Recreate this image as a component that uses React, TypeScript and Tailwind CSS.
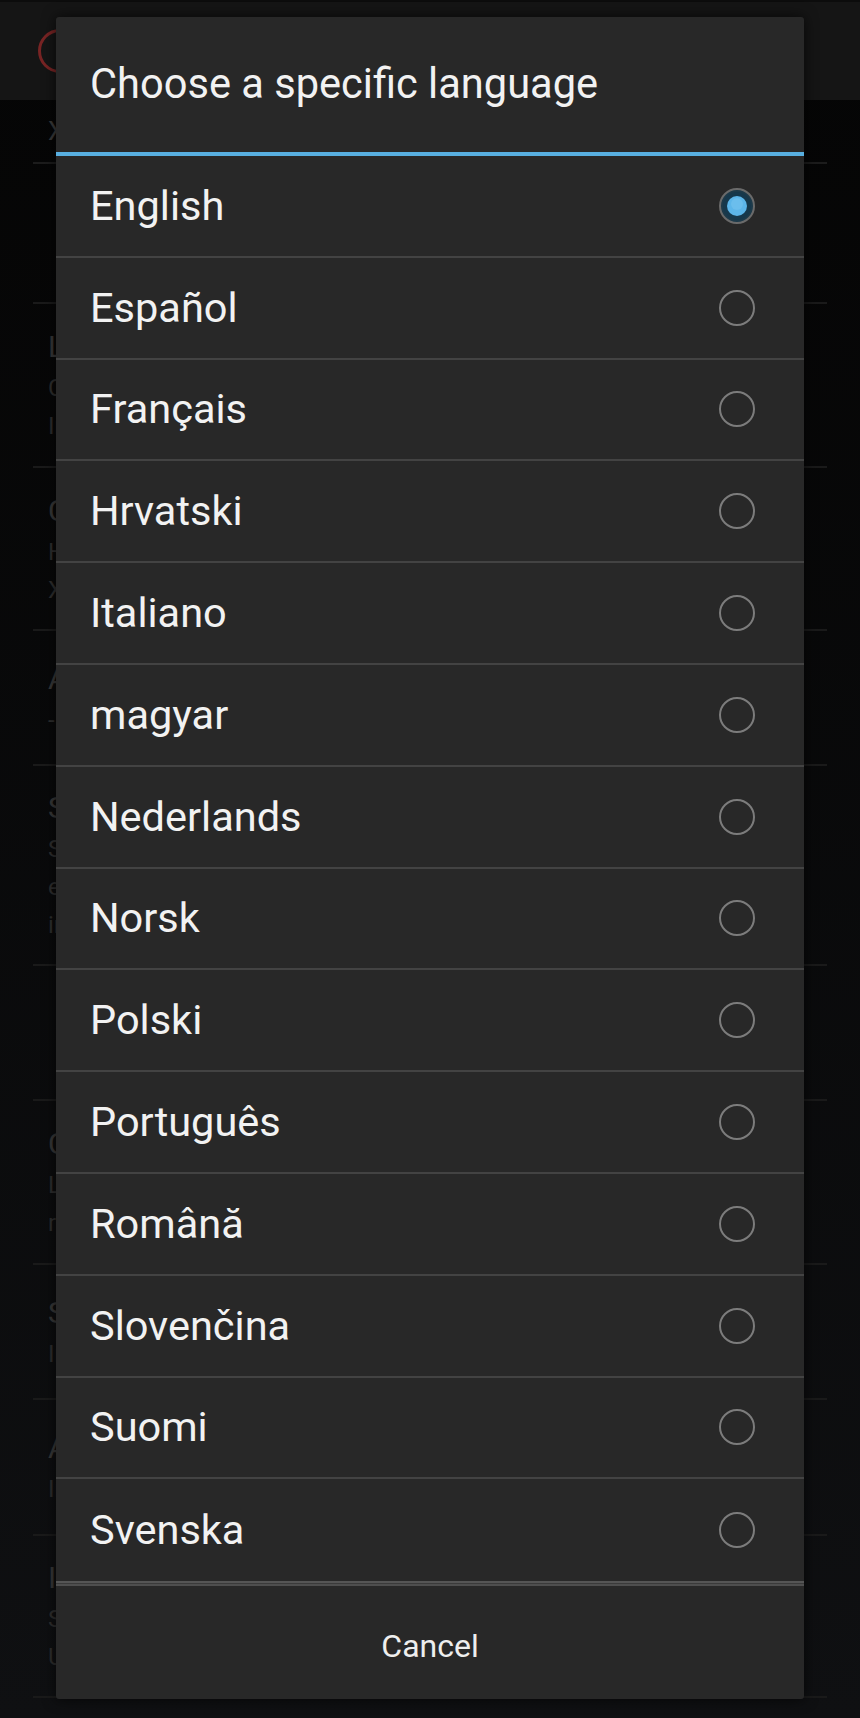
import { useState } from 'react';

const languages: string[] = [
  'English',
  'Español',
  'Français',
  'Hrvatski',
  'Italiano',
  'magyar',
  'Nederlands',
  'Norsk',
  'Polski',
  'Português',
  'Română',
  'Slovenčina',
  'Suomi',
  'Svenska'
];

// settings page behind the dialog, only its left edge peeks out
type BgSection = { height: number; lines: string[] };

const bgSections: BgSection[] = [
  { height: 140, lines: [] },
  { height: 164, lines: ['Language', 'Choose the display language', 'In English'] },
  { height: 163, lines: ['Currency', 'Home currency', 'XAF'] },
  { height: 135, lines: ['Amount', '-'] },
  { height: 200, lines: ['Show', 'Show all rates', 'every time', 'in list'] },
  { height: 135, lines: [] },
  { height: 164, lines: ['Colors', 'Light theme', 'rates'] },
  { height: 135, lines: ['Share', 'Include link'] },
  { height: 136, lines: ['About', 'Info'] },
  { height: 162, lines: ['Info', 'Share', 'Updates'] }
];

const RadioDot = ({ checked }: { checked: boolean }) => (
  <svg width="40" height="40" viewBox="0 0 40 40">
    {checked ? (
      <>
        <circle cx="20" cy="20" r="17" fill="#1d3a4a" stroke="#6a6a6a" strokeWidth="2" />
        <circle cx="20" cy="20" r="14" fill="#16384c" />
        <circle cx="20" cy="20" r="10" fill="#5cb6ea" />
        <circle cx="20" cy="18" r="6" fill="#7ac6f0" opacity="0.5" />
      </>
    ) : (
      <circle cx="20" cy="20" r="17" fill="none" stroke="#7c7c7c" strokeWidth="2" />
    )}
  </svg>
);

export default function App() {
  const [selected, setSelected] = useState<string>('English');

  return (
    <div
      className="relative w-[860px] h-[1718px] overflow-hidden bg-gradient-to-b from-[#050505] to-[#0f1012]"
      style={{ fontFamily: 'Roboto, "Noto Sans", sans-serif' }}
    >
      {/* app behind the dialog */}
      <header className="h-[100px] bg-[#151515] border-t-2 border-[#0c0c0c] flex items-center pl-[38px]">
        <div className="w-[44px] h-[44px] rounded-full border-[3px] border-[#782424]" />
      </header>
      <div className="h-[64px] flex items-center border-b-2 border-[#1c1c1c] mx-[33px] pl-[15px] text-[26px] text-[#3a3a3a]">
        X
      </div>
      <div className="mx-[33px]">
        {bgSections.map((section, i) => (
          <div
            key={i}
            className="flex flex-col justify-center gap-[10px] pl-[15px] border-b-2 border-[#1a1a1a]"
            style={{ height: section.height }}
          >
            {section.lines.map((line, j) => (
              <div
                key={j}
                className={
                  j === 0
                    ? 'text-[30px] leading-[34px] text-[#383838]'
                    : 'text-[24px] leading-[28px] text-[#2e2e2e]'
                }
              >
                {line}
              </div>
            ))}
          </div>
        ))}
      </div>

      {/* dialog */}
      <div className="absolute left-[56px] top-[17px] w-[748px] rounded-[3px] bg-[#282828] shadow-[0_0_14px_rgba(0,0,0,0.7)]">
        <div className="h-[135px] flex items-center pl-[34px] text-[41.6px] text-[#f2f2f2]">
          Choose a specific language
        </div>
        <div className="h-[4px] bg-[#58afe0]" />
        {languages.map((lang, i) => (
          <div
            key={lang}
            onClick={() => setSelected(lang)}
            className={`h-[101.8px] flex items-center justify-between pl-[34px] pr-[47px] cursor-pointer ${
              i < languages.length - 1 ? 'border-b-2 border-[#434343]' : ''
            }`}
          >
            <span className="text-[41.5px] text-[#f2f2f2]">{lang}</span>
            <RadioDot checked={selected === lang} />
          </div>
        ))}
        <div className="h-[2px] bg-[#555555]" />
        <div className="h-[1px] bg-[#3a3a3a]" />
        <div className="h-[2px] bg-[#4e4e4e]" />
        <button className="w-full h-[113px] pt-[6px] flex items-center justify-center text-[32px] text-[#eeeeee]">
          Cancel
        </button>
      </div>
    </div>
  );
}
